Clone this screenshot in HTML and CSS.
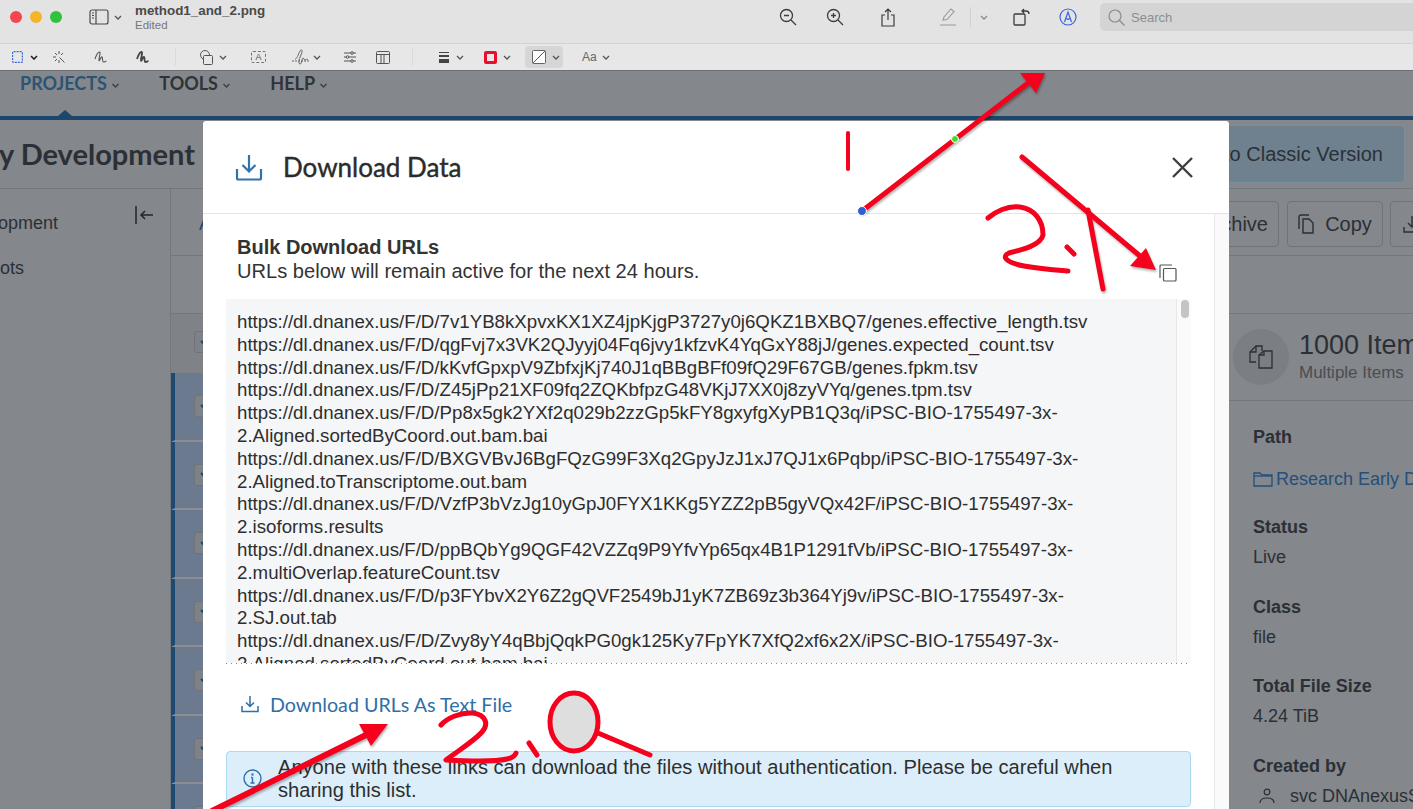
FILE: index.html

```html
<!DOCTYPE html>
<html lang="en">
<head>
    <meta charset="UTF-8">
    <title>method1_and_2.png</title>
    <link rel="stylesheet" href="styles.css">
</head>
<body>
<div class="window">
    <!-- preview app chrome -->
    <div class="titlebar">
        <div class="lights"><span class="light red"></span><span class="light amber"></span><span class="light green"></span></div>
        <svg class="tb-sidebar" width="20" height="16" viewBox="0 0 20 16" fill="none" stroke="#4a4a4a" stroke-width="1.2"><rect x="1" y="1" width="18" height="14" rx="2"/><path d="M7 1v14"/><path d="M3 4h2M3 6.5h2M3 9h2" stroke-width="1"/></svg>
        <svg class="chev tb-chev" viewBox="0 0 8 5"><path d="M1 1l3 3 3-3"/></svg>
        <div class="fileinfo">
            <div class="filename">method1_and_2.png</div>
            <div class="edited">Edited</div>
        </div>
        <div class="tb-right">
            <svg class="ti" width="18" height="18" viewBox="0 0 18 18" fill="none" stroke="#3d3d3d" stroke-width="1.3"><circle cx="7.5" cy="7.5" r="6"/><path d="M12 12l5 5M5 7.5h5"/></svg>
            <svg class="ti ti-zoomin" width="18" height="18" viewBox="0 0 18 18" fill="none" stroke="#3d3d3d" stroke-width="1.3"><circle cx="7.5" cy="7.5" r="6"/><path d="M12 12l5 5M5 7.5h5M7.5 5v5"/></svg>
            <svg class="ti ti-share" width="14" height="19" viewBox="0 0 14 19" fill="none" stroke="#3d3d3d" stroke-width="1.2"><path d="M4 7H1v11h12V7h-3M7 12V1M4 4l3-3 3 3"/></svg>
            <svg class="ti ti-pen" width="18" height="18" viewBox="0 0 18 18" fill="none" stroke="#9a9a9a" stroke-width="1.1"><path d="M4 12l1-3 7-8 3 2.500-7 8zM1 17h16"/></svg>
            <span class="tb-divider"></span>
            <svg class="chev ti-chev" viewBox="0 0 8 5"><path d="M1 1l3 3 3-3" stroke="#8a8a8a"/></svg>
            <svg class="ti ti-rotate" width="17" height="18" viewBox="0 0 17 18" fill="none" stroke="#3d3d3d" stroke-width="1.3"><rect x="1" y="6" width="11" height="11" rx="1"/><path d="M9 3h4a3 3 0 0 1 3 3M11 1L9 3l2 2"/></svg>
            <svg class="ti ti-markup" width="18" height="18" viewBox="0 0 18 18" fill="none" stroke="#3a63e0" stroke-width="1.2"><circle cx="9" cy="9" r="8"/><path d="M5.500 14L9 4l3.500 10M7.500 10.500c1 1 2 1 3 0"/></svg>
            <div class="search">
                <svg width="17" height="17" viewBox="0 0 17 17" fill="none" stroke="#8c8c8c" stroke-width="1.2"><circle cx="7" cy="7" r="6"/><path d="M11.500 11.500l5 5"/></svg>
                <span>Search</span>
            </div>
        </div>
    </div>
    <div class="markupbar">
        <svg class="mk-select" width="11" height="12" viewBox="0 0 11 12" fill="none" stroke="#3a63e0" stroke-width="1.2" stroke-dasharray="2 1"><rect x="0.600" y="0.600" width="9.800" height="10.800" rx="1"/></svg>
        <svg class="chev dark mk-c1" viewBox="0 0 8 5"><path d="M1 1l3 3 3-3"/></svg>
        <svg class="mk-wand" width="13" height="13" viewBox="0 0 13 13" fill="none" stroke="#555" stroke-width="1"><path d="M6 0v3M0 6h3M2 2l2 2M10 2L8 4M2 10l2-2M6.500 6.500l5 5" /><path d="M9 0v0M6 9v3"/></svg>
        <svg class="mk-sketch" width="13" height="13" viewBox="0 0 13 13" fill="none" stroke="#555" stroke-width="1.100"><path d="M1 8c1-3 3-7 4.500-7S5 6 5 9s2-4 3-3 0 5 1.500 5 2-1 3-1"/></svg>
        <svg class="mk-draw" width="13" height="13" viewBox="0 0 13 13" fill="none" stroke="#444" stroke-width="1.800"><path d="M1 8c1-3 3-7 4.500-7S5 6 5 9s2-4 3-3 0 5 1.500 5 2-1 3-1"/></svg>
        <span class="mk-sep mk-s1"></span>
        <svg class="mk-shapes" width="13" height="15" viewBox="0 0 13 15" fill="none" stroke="#555" stroke-width="1"><circle cx="5" cy="5" r="4.500"/><rect x="3.500" y="5.500" width="9" height="9" rx="1" fill="#e7e7e7"/></svg>
        <svg class="chev mk-c2" viewBox="0 0 8 5"><path d="M1 1l3 3 3-3"/></svg>
        <span class="mk-text">A</span>
        <svg class="mk-sign" width="18" height="16" viewBox="0 0 18 16" fill="none" stroke="#666" stroke-width="1"><path d="M0 12h18" stroke-dasharray="2 1"/><path d="M3 10c2 0 3-4 5-8 2-3 3 0 1 4s-3 9-1 9 2-6 3-6 1 2 2 2 2-1 3-1"/></svg>
        <svg class="chev mk-c3" viewBox="0 0 8 5"><path d="M1 1l3 3 3-3"/></svg>
        <svg class="mk-adjust" width="12" height="12" viewBox="0 0 12 12" fill="#e7e7e7" stroke="#555" stroke-width="1"><path d="M0 2h12M0 6h12M0 10h12"/><circle cx="8" cy="2" r="1.300"/><circle cx="3.500" cy="6" r="1.300"/><circle cx="8" cy="10" r="1.300"/></svg>
        <svg class="mk-layout" width="14" height="13" viewBox="0 0 14 13" fill="none" stroke="#555" stroke-width="1"><rect x="0.500" y="0.500" width="13" height="12" rx="1"/><path d="M0.500 3.500h13M8 3.500v9M5 3.500v9"/></svg>
        <span class="mk-sep mk-s2"></span>
        <span class="mk-lines"><i class="l1"></i><i class="l2"></i><i class="l3"></i></span>
        <svg class="chev mk-c4" viewBox="0 0 8 5"><path d="M1 1l3 3 3-3"/></svg>
        <span class="mk-border"><i></i></span>
        <svg class="chev mk-c5" viewBox="0 0 8 5"><path d="M1 1l3 3 3-3"/></svg>
        <span class="mk-fill">
            <svg width="14" height="14" viewBox="0 0 14 14"><rect x="0.500" y="0.500" width="13" height="13" rx="1" fill="#fff" stroke="#666"/><path d="M1 13L13 1" stroke="#e8112d"/></svg>
            <svg class="chev" viewBox="0 0 8 5"><path d="M1 1l3 3 3-3"/></svg>
        </span>
        <span class="mk-aa">Aa</span>
        <svg class="chev mk-c6" viewBox="0 0 8 5"><path d="M1 1l3 3 3-3"/></svg>
    </div>

    <!-- dimmed page behind the dialog -->
    <div class="page">
        <nav class="nav">
            <a class="nav-item active">PROJECTS <svg class="chev nav-chev" viewBox="0 0 8 5"><path d="M1 1l3 3 3-3"/></svg></a>
            <a class="nav-item">TOOLS <svg class="chev nav-chev" viewBox="0 0 8 5"><path d="M1 1l3 3 3-3"/></svg></a>
            <a class="nav-item">HELP <svg class="chev nav-chev" viewBox="0 0 8 5"><path d="M1 1l3 3 3-3"/></svg></a>
        </nav>
        <header class="header">
            <h2 class="project-title"><span>Research Early Development</span></h2>
            <div class="classic-btn">Switch to Classic Version</div>
        </header>
        <div class="content">
            <aside class="side">
                <div class="side-top">
                    <div class="side-title"><span>Research Early Development</span></div>
                    <svg class="collapse" width="19" height="18" viewBox="0 0 19 18" fill="none" stroke="#22272c" stroke-width="1.500"><path d="M1 0v18M18 9H6M10 5L6 9l4 4"/></svg>
                </div>
                <div class="side-title side-second"><span>Plots</span></div>
            </aside>
            <div class="main">
                <div class="toolbar">
                    <span class="tab-link">All</span>
                    <div class="actions">
                        <div class="act-btn act-archive">Archive</div>
                        <div class="act-btn act-copy">
                            <svg width="17" height="20" viewBox="0 0 17 20" fill="none" stroke="#2b3036" stroke-width="1.400"><path d="M1 15V3a2 2 0 0 1 2-2h8"/><path d="M5 5h6l4 4v10H5z"/></svg>
                            Copy
                        </div>
                        <div class="act-btn act-dl">
                            <svg width="18" height="18" viewBox="0 0 18 18" fill="none" stroke="#2b3036" stroke-width="1.400"><path d="M9 1v11M5 8l4 4 4-4M1 12v5h16v-5"/></svg>
                        </div>
                    </div>
                </div>
                <div class="filters"></div>
                <div class="split">
                    <div class="table">
                        <div class="table-head"><span class="sel-btn"><svg class="chev" viewBox="0 0 8 5"><path d="M1 1l3 3 3-3"/></svg></span></div>
                        <div class="table-row"><span class="sel-btn"><svg class="chev" viewBox="0 0 8 5"><path d="M1 1l3 3 3-3"/></svg></span></div>
                        <div class="table-row"><span class="sel-btn"><svg class="chev" viewBox="0 0 8 5"><path d="M1 1l3 3 3-3"/></svg></span></div>
                        <div class="table-row"><span class="sel-btn"><svg class="chev" viewBox="0 0 8 5"><path d="M1 1l3 3 3-3"/></svg></span></div>
                        <div class="table-row"><span class="sel-btn"><svg class="chev" viewBox="0 0 8 5"><path d="M1 1l3 3 3-3"/></svg></span></div>
                        <div class="table-row"><span class="sel-btn"><svg class="chev" viewBox="0 0 8 5"><path d="M1 1l3 3 3-3"/></svg></span></div>
                        <div class="table-row"><span class="sel-btn"><svg class="chev" viewBox="0 0 8 5"><path d="M1 1l3 3 3-3"/></svg></span></div>
                        <div class="table-row"><span class="sel-btn"><svg class="chev" viewBox="0 0 8 5"><path d="M1 1l3 3 3-3"/></svg></span></div>
                    </div>
                    <div class="details">
                        <div class="details-head">
                            <span class="details-icon">
                                <svg width="26" height="26" viewBox="0 0 26 26" fill="none" stroke="#2b3036" stroke-width="1.300"><path d="M8 18H2V8l6-6h6v5"/><path d="M2 8h6V2"/><path d="M11 24V11l5-4h8v17z"/><path d="M11 11h5V7"/></svg>
                            </span>
                            <div>
                                <div class="details-name">1000 Items</div>
                                <div class="details-sub">Multiple Items</div>
                            </div>
                        </div>
                        <div class="details-body">
                            <div class="field field-path">
                                <div class="field-label">Path</div>
                                <div class="field-link">
                                    <svg width="20" height="15" viewBox="0 0 20 15" fill="none" stroke="#24507a" stroke-width="1.300"><path d="M1 14V1h6l2 2h10v11z"/><path d="M1 4h18"/></svg>
                                    Research Early Development
                                </div>
                            </div>
                            <div class="field"><div class="field-label">Status</div><div class="field-value">Live</div></div>
                            <div class="field"><div class="field-label">Class</div><div class="field-value">file</div></div>
                            <div class="field"><div class="field-label">Total File Size</div><div class="field-value">4.24 TiB</div></div>
                            <div class="field">
                                <div class="field-label">Created by</div>
                                <div class="field-user">
                                    <svg width="16" height="16" viewBox="0 0 16 16" fill="none" stroke="#2b3036" stroke-width="1.200"><circle cx="8" cy="4" r="2.800"/><path d="M1 15c0-4 3-5 7-5s7 1 7 5"/></svg>
                                    svc DNAnexusService
                                </div>
                            </div>
                        </div>
                    </div>
                </div>
            </div>
        </div>

        <!-- dialog -->
        <div class="modal">
            <div class="modal-head">
                <svg class="modal-icon" width="28" height="27" viewBox="0 0 28 27" fill="none" stroke="#2f73ad" stroke-width="2.200"><path d="M14 1v16M7.500 11l6.500 6.500 6.500-6.500"/><path d="M2 15v9a1.500 1.500 0 0 0 1.500 1.500h21A1.500 1.500 0 0 0 26 24v-9"/></svg>
                <h3 class="modal-title">Download Data</h3>
                <svg class="modal-close" width="21" height="21" viewBox="0 0 21 21" fill="none" stroke="#3f3f3f" stroke-width="2.400"><path d="M1 1l19 19M20 1L1 20"/></svg>
            </div>
            <div class="modal-main">
                <div class="modal-body">
                    <div class="bulk-head">
                        <div>
                            <div class="bulk-title">Bulk Download URLs</div>
                            <div class="bulk-note">URLs below will remain active for the next 24 hours.</div>
                        </div>
                        <svg class="copy-icon" width="18" height="18" viewBox="0 0 18 18" fill="none" stroke="#555" stroke-width="1.200"><path d="M1 14V2a1 1 0 0 1 1-1h11"/><rect x="4.500" y="4.500" width="12.500" height="12.500" rx="1"/></svg>
                    </div>
                    <div class="url-box">
                        <div class="url-list">https://dl.dnanex.us/F/D/7v1YB8kXpvxKX1XZ4jpKjgP3727y0j6QKZ1BXBQ7/genes.effective_length.tsv
https://dl.dnanex.us/F/D/qgFvj7x3VK2QJyyj04Fq6jvy1kfzvK4YqGxY88jJ/genes.expected_count.tsv
https://dl.dnanex.us/F/D/kKvfGpxpV9ZbfxjKj740J1qBBgBFf09fQ29F67GB/genes.fpkm.tsv
https://dl.dnanex.us/F/D/Z45jPp21XF09fq2ZQKbfpzG48VKjJ7XX0j8zyVYq/genes.tpm.tsv
https://dl.dnanex.us/F/D/Pp8x5gk2YXf2q029b2zzGp5kFY8gxyfgXyPB1Q3q/iPSC-BIO-1755497-3x-
2.Aligned.sortedByCoord.out.bam.bai
https://dl.dnanex.us/F/D/BXGVBvJ6BgFQzG99F3Xq2GpyJzJ1xJ7QJ1x6Pqbp/iPSC-BIO-1755497-3x-
2.Aligned.toTranscriptome.out.bam
https://dl.dnanex.us/F/D/VzfP3bVzJg10yGpJ0FYX1KKg5YZZ2pB5gyVQx42F/iPSC-BIO-1755497-3x-
2.isoforms.results
https://dl.dnanex.us/F/D/ppBQbYg9QGF42VZZq9P9YfvYp65qx4B1P1291fVb/iPSC-BIO-1755497-3x-
2.multiOverlap.featureCount.tsv
https://dl.dnanex.us/F/D/p3FYbvX2Y6Z2gQVF2549bJ1yK7ZB69z3b364Yj9v/iPSC-BIO-1755497-3x-
2.SJ.out.tab
https://dl.dnanex.us/F/D/Zvy8yY4qBbjQqkPG0gk125Ky7FpYK7XfQ2xf6x2X/iPSC-BIO-1755497-3x-
2.Aligned.sortedByCoord.out.bam.bai</div>
                        <div class="url-track"><span class="url-thumb"></span></div>
                    </div>
                    <div class="url-dots"></div>
                    <a class="dl-link">
                        <svg width="18" height="18" viewBox="0 0 18 18" fill="none" stroke="#2f6fa8" stroke-width="1.500"><path d="M9 1v10M5 7.500l4 4 4-4M1 11v5.500h16V11"/></svg>
                        Download URLs As Text File
                    </a>
                    <div class="alert">
                        <svg class="alert-icon" width="19" height="19" viewBox="0 0 19 19" fill="none" stroke="#2f6fa8" stroke-width="1.400"><circle cx="9.500" cy="9.500" r="8.500"/><path d="M9.500 8.500v5.500M7.500 14h4M8 8.500h1.500"/><circle cx="9.500" cy="5.500" r="0.500"/></svg>
                        <div class="alert-text">Anyone with these links can download the files without authentication. Please be careful when sharing this list.</div>
                    </div>
                </div>
                <div class="modal-track"></div>
            </div>
        </div>
    </div>

    <!-- red annotations drawn on top of the image -->
    <svg class="marks" width="1413" height="809" viewBox="0 0 1413 809" fill="none" stroke="#f5001d" stroke-linecap="round" stroke-linejoin="round">
        <g class="shadowed">
            <path d="M862 211L1028 83" stroke-width="5"/>
            <path d="M1045 73L1020 73 1036 93z" fill="#f5001d" stroke="none"/>
            <path d="M1022 157L1140 256" stroke-width="5"/>
            <path d="M1156 270L1130 266 1146 248z" fill="#f5001d" stroke="none"/>
            <path d="M1088 210L1103 289" stroke-width="5"/>
            <path d="M212 811L372 732" stroke-width="6"/>
            <path d="M388 724L359 724 371 746z" fill="#f5001d" stroke="none"/>
        </g>
        <path d="M848 133V169" stroke-width="4"/>
        <path d="M988 218C995 212 1008 205 1020 207C1034 209 1043 220 1043 235C1041 245 1022 250 1009 253C1002 256 1004 262 1024 266C1040 269 1055 270 1068 271" stroke-width="5"/>
        <path d="M1067 247L1074 254" stroke-width="5"/>
        <path d="M441 725C447 718 461 712 473 713C486 715 489 724 482 732C473 742 456 752 446 760C465 761 495 762 507 759C512 758 515 756 516 753" stroke-width="5"/>
        <path d="M529 743L537 755" stroke-width="5"/>
        <ellipse cx="574" cy="722" rx="24" ry="29" fill="#dedede" stroke-width="5"/>
        <path d="M598 733L650 755" stroke-width="5"/>
        <circle cx="955" cy="139" r="3.500" fill="#3ddc26" stroke="#fff" stroke-width="1"/>
        <circle cx="862" cy="211" r="4.500" fill="#2f5fd0" stroke="#fff" stroke-width="1"/>
    </svg>
</div>
</body>
</html>
```

FILE: styles.css

```css
* {
    box-sizing: border-box;
}
body {
    margin: 0;
    font-family: "Liberation Sans", Arial, sans-serif;
    overflow: hidden;
}
svg {
    flex-shrink: 0;
}
.window {
    position: relative;
    width: 1413px;
    height: 809px;
    overflow: hidden;
}
.chev {
    width: 8px;
    height: 5px;
    fill: none;
    stroke: #555;
    stroke-width: 1.3;
}
.chev.dark {
    stroke: #222;
    stroke-width: 1.6;
}

/* title bar */
.titlebar {
    display: flex;
    align-items: center;
    height: 44px;
    padding-left: 10px;
    padding-bottom: 9px;
    background: #e3e3e3;
    border-bottom: 1px solid #d2d2d2;
}
.lights {
    display: flex;
    gap: 8px;
}
.light {
    width: 12px;
    height: 12px;
    border-radius: 50%;
}
.light.red { background: #f5454e; }
.light.amber { background: #f4b526; }
.light.green { background: #2fc23a; }
.tb-sidebar { margin-left: 27px; }
.tb-chev { margin-left: 5px; }
.fileinfo { margin-left: 13px; }
.filename {
    font-size: 13.400px;
    font-weight: bold;
    line-height: 16px;
    color: #4a4a4a;
}
.edited {
    font-size: 11.500px;
    line-height: 13px;
    color: #777;
}
.tb-right {
    display: flex;
    align-items: center;
    margin-left: auto;
}
.ti-zoomin { margin-left: 29px; }
.ti-share { margin-left: 37px; }
.ti-pen { margin-left: 44px; }
.tb-divider {
    width: 1px;
    height: 20px;
    margin-left: 13px;
    background: #d0d0d0;
}
.ti-chev { margin-left: 9px; }
.ti-rotate { margin-left: 25px; }
.ti-markup { margin-left: 29px; }
.search {
    display: flex;
    align-items: center;
    gap: 6px;
    width: 313px;
    height: 28px;
    margin-left: 23px;
    padding-left: 8px;
    background: #d4d4d4;
    border-radius: 5px 0 0 5px;
    font-size: 13px;
    color: #8e8e8e;
}

/* markup bar */
.markupbar {
    display: flex;
    align-items: center;
    height: 27px;
    padding-left: 12px;
    background: #e7e7e7;
    border-bottom: 1px solid #6d6f72;
}
.mk-c1 { margin-left: 7px; }
.mk-wand { margin-left: 15px; }
.mk-sketch { margin-left: 28px; }
.mk-draw { margin-left: 29px; }
.mk-sep {
    width: 1px;
    height: 18px;
    background: #dadada;
}
.mk-s1 { margin-left: 26px; }
.mk-shapes { margin-left: 24px; }
.mk-c2 { margin-left: 6px; }
.mk-text {
    width: 15px;
    height: 12px;
    margin-left: 24px;
    border: 1px dashed #777;
    border-radius: 2px;
    font-size: 9px;
    line-height: 10px;
    text-align: center;
    color: #555;
}
.mk-sign { margin-left: 26px; }
.mk-c3 { margin-left: 3px; }
.mk-adjust { margin-left: 23px; }
.mk-layout { margin-left: 20px; }
.mk-s2 { margin-left: 22px; }
.mk-lines {
    display: flex;
    flex-direction: column;
    gap: 2px;
    width: 10px;
    margin-left: 26px;
}
.mk-lines i {
    display: block;
    background: #444;
}
.mk-lines .l1 { height: 1px; }
.mk-lines .l2 { height: 2px; }
.mk-lines .l3 { height: 4px; }
.mk-c4 { margin-left: 7px; }
.mk-border {
    width: 13px;
    height: 13px;
    margin-left: 20px;
    padding: 3px;
    background: #e8112d;
    border-radius: 2px;
}
.mk-border i {
    display: block;
    width: 7px;
    height: 7px;
    background: #e7e7e7;
}
.mk-c5 { margin-left: 6px; }
.mk-fill {
    display: flex;
    align-items: center;
    gap: 6px;
    width: 38px;
    height: 22px;
    margin-left: 14px;
    padding-left: 7px;
    background: #d6d6d6;
    border-radius: 4px;
}
.mk-aa {
    margin-left: 19px;
    font-size: 12px;
    color: #666;
}
.mk-c6 { margin-left: 5px; }

/* dimmed page */
.page {
    position: relative;
    height: 738px;
    background: #84878b;
    color: #2b3036;
}
.nav {
    display: flex;
    align-items: flex-start;
    height: 49px;
    padding: 1px 0 0 20px;
    border-bottom: 4px solid #1d466c;
}
.nav-item {
    position: relative;
    font-family: Lato, sans-serif;
    font-size: 18px;
    line-height: 22px;
    font-weight: 700;
    color: #2f3438;
    margin-right: 39px;
    white-space: nowrap;
}
.nav-item.active {
    color: #2c5474;
}
.nav-item.active::after {
    content: "";
    position: absolute;
    left: 38px;
    top: 38px;
    border-left: 7px solid transparent;
    border-right: 7px solid transparent;
    border-bottom: 6px solid #1d466c;
}
.nav-chev {
    width: 9px;
    vertical-align: middle;
    stroke: #3a3f44;
}
.header {
    display: flex;
    align-items: center;
    justify-content: space-between;
    height: 69px;
    border-bottom: 1px solid #74777b;
}
.project-title {
    display: flex;
    justify-content: flex-end;
    width: 195px;
    margin: 0 0 2px;
    overflow: hidden;
    white-space: nowrap;
    font-family: Lato, sans-serif;
    font-size: 29px;
    color: #2b3036;
}
.classic-btn {
    width: 380px;
    height: 58px;
    margin-right: 8px;
    padding-right: 21px;
    background: #6f818e;
    border: 1px solid #76909f;
    border-radius: 5px;
    font-size: 20px;
    line-height: 56px;
    text-align: right;
    white-space: nowrap;
}
.content {
    display: flex;
    height: 620px;
}
.side {
    width: 171px;
    flex-shrink: 0;
    border-right: 1px solid #74777b;
}
.side-top {
    display: flex;
    align-items: center;
    justify-content: space-between;
    height: 44px;
    margin-top: 12px;
    padding-right: 16px;
}
.side-title {
    display: flex;
    justify-content: flex-end;
    width: 58px;
    overflow: hidden;
    white-space: nowrap;
    font-size: 18px;
}
.side-top .collapse {
    margin-top: -16px;
}
.side-second {
    width: 24px;
    margin-top: 13px;
}
.main {
    flex: 1;
    min-width: 0;
    overflow: hidden;
}
.toolbar {
    display: flex;
    align-items: center;
    height: 67px;
    padding-left: 28px;
    padding-top: 4px;
    border-bottom: 1px solid #74777b;
}
.tab-link {
    font-size: 18px;
    color: #1d466c;
}
.actions {
    display: flex;
    flex-shrink: 0;
    gap: 7px;
    margin-left: auto;
    margin-right: -70px;
}
.act-btn {
    display: flex;
    align-items: center;
    justify-content: center;
    gap: 10px;
    height: 46px;
    padding: 0 12px;
    border: 1px solid #70737a;
    border-radius: 4px;
    font-size: 20px;
}
.act-archive { padding-right: 10px; }
.act-copy { width: 96px; margin-left: 1px; }
.act-dl { width: 93px; justify-content: flex-start; }
.filters {
    height: 58px;
    border-bottom: 1px solid #74777b;
}
.split {
    display: flex;
    height: 496px;
}
.table {
    width: 1058px;
    flex-shrink: 0;
}
.table-head {
    display: flex;
    align-items: center;
    height: 59px;
    padding-left: 23px;
    padding-bottom: 3px;
    background: #7f8286;
}
.table-row {
    display: flex;
    align-items: center;
    height: 68.5px;
    padding-left: 19px;
    background: #6b7a8f;
    border-left: 4px solid #1d4a72;
    border-bottom: 2px solid #8b8e92;
}
.sel-btn {
    display: flex;
    align-items: center;
    width: 22px;
    height: 22px;
    padding-left: 4px;
    background: #7d8288;
    border: 1px solid #70747a;
    border-radius: 3px;
}
.sel-btn .chev {
    stroke: #1d466c;
    stroke-width: 2;
    width: 10px;
}
.details {
    flex: 1;
    min-width: 0;
}
.details-head {
    display: flex;
    align-items: center;
    gap: 10px;
    height: 87px;
    padding: 0 0 0 4px;
    border-bottom: 1px solid #74777b;
    white-space: nowrap;
}
.details-icon {
    display: flex;
    align-items: center;
    justify-content: center;
    width: 56px;
    height: 56px;
    flex-shrink: 0;
    border-radius: 50%;
    background: #7b7e82;
}
.details-name {
    font-size: 27px;
    line-height: 32px;
}
.details-sub {
    font-size: 17px;
    line-height: 24px;
    color: #4a4d52;
}
.details-body {
    padding: 24px 0 0 24px;
    white-space: nowrap;
}
.field {
    height: 79.500px;
}
.field-path {
    height: 90px;
}
.field-label {
    font-size: 18px;
    font-weight: bold;
    line-height: 24px;
}
.field-value {
    margin-top: 6px;
    font-size: 18px;
    line-height: 24px;
}
.field-link {
    display: flex;
    align-items: center;
    gap: 3px;
    margin-top: 18px;
    font-size: 18px;
    line-height: 24px;
    color: #24507a;
}
.field-user {
    display: flex;
    align-items: center;
    gap: 15px;
    margin-top: 6px;
    padding-left: 6px;
    font-size: 18px;
    line-height: 24px;
}

/* dialog */
.modal {
    position: absolute;
    left: 203px;
    top: 50px;
    bottom: 0;
    width: 1026px;
    display: flex;
    flex-direction: column;
    background: #fff;
    border-radius: 3px 3px 0 0;
    color: #333;
}
.modal-head {
    display: flex;
    align-items: center;
    height: 93px;
    flex-shrink: 0;
    padding: 0 36px 0 32px;
    border-bottom: 1px solid #e4e4e4;
}
.modal-title {
    margin: 0 0 0 20px;
    font-family: Lato, sans-serif;
    font-size: 26px;
    font-weight: 400;
    -webkit-text-stroke: 0.4px #2b2b2b;
    color: #2b2b2b;
    flex: 1;
}
.modal-main {
    display: flex;
    flex: 1;
    min-height: 0;
}
.modal-body {
    width: 1012px;
    padding: 21px 23px 0;
    border-right: 1px solid #e8e8e8;
}
.modal-track {
    flex: 1;
    background: #fafafa;
}
.bulk-head {
    display: flex;
    justify-content: space-between;
    align-items: flex-end;
    padding-left: 11px;
    padding-right: 14px;
}
.bulk-title {
    font-size: 20px;
    font-weight: bold;
    line-height: 24px;
}
.bulk-note {
    font-size: 20.100px;
    line-height: 24px;
}
.copy-icon {
    margin-bottom: 1px;
}
.url-box {
    display: flex;
    height: 364px;
    margin-top: 16px;
    background: #f5f6f8;
    overflow: hidden;
}
.url-list {
    flex: 1;
    padding: 12px 0 0 11px;
    font-size: 18.700px;
    line-height: 22.800px;
    white-space: pre-line;
    color: #2e2e2e;
}
.url-track {
    width: 15px;
    padding: 1px 0 0 4px;
    background: #fafafa;
    border-left: 1px solid #e8e8e8;
}
.url-thumb {
    display: block;
    width: 8px;
    height: 18px;
    background: #c4c4c4;
    border-radius: 4px;
}
.url-dots {
    height: 1px;
    background: linear-gradient(to right, #6f8cb0 1px, transparent 1px) 0 0 / 5px 1px repeat-x;
}
.dl-link {
    display: flex;
    align-items: center;
    gap: 11px;
    height: 26px;
    margin: 27px 0 34px;
    padding-left: 15px;
    font-family: Lato, sans-serif;
    font-size: 19.700px;
    color: #2f6fa8;
}
.alert {
    display: flex;
    height: 56px;
    padding: 4px 16px 0;
    background: #dceefa;
    border: 1px solid #abd8f3;
    border-radius: 4px;
}
.alert-icon {
    margin: 13px 16px 0 0;
}
.alert-text {
    font-size: 20.100px;
    line-height: 23px;
    color: #2e2e2e;
}

/* annotations */
.marks {
    position: absolute;
    left: 0;
    top: 0;
}
.shadowed {
    filter: drop-shadow(1px 2px 1px rgba(0, 0, 0, 0.3));
}
```
